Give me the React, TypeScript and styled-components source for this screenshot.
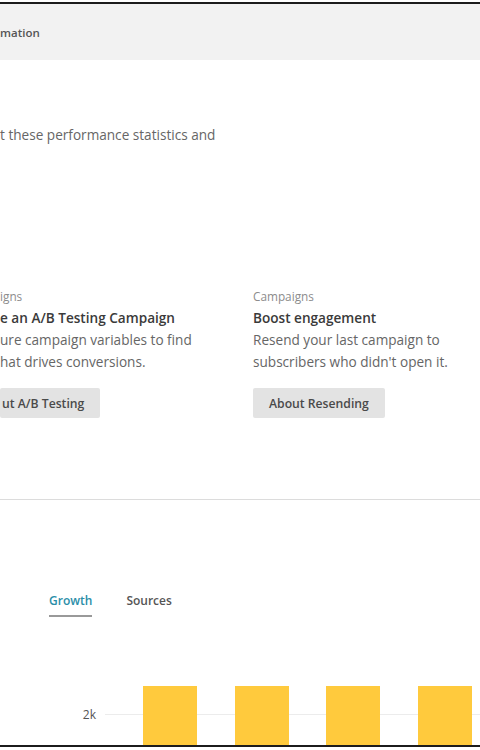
import styled, { createGlobalStyle } from 'styled-components';

const GlobalStyle = createGlobalStyle`
  html, body {
    margin: 0;
    padding: 0;
    background: #fff;
  }
  body {
    font-family: 'Open Sans', 'Noto Sans', sans-serif;
    color: #555;
  }
  * {
    box-sizing: border-box;
  }
`;

const bars = [1, 2, 3, 4];

export default function App() {
  return (
    <>
      <GlobalStyle />
      <Frame>
        <TopBar>mation</TopBar>
        <Intro>t these performance statistics and</Intro>
        <Cards>
          <Card>
            <Label>igns</Label>
            <Title>e an A/B Testing Campaign</Title>
            <Desc>
              ure campaign variables to find
              <br />
              hat drives conversions.
            </Desc>
            <Button $clipped>ut A/B Testing</Button>
          </Card>
          <Card>
            <Label>Campaigns</Label>
            <Title>Boost engagement</Title>
            <Desc>
              Resend your last campaign to
              <br />
              subscribers who didn't open it.
            </Desc>
            <Button>About Resending</Button>
          </Card>
        </Cards>
        <Divider />
        <Tabs>
          <Tab $active>Growth</Tab>
          <Tab>Sources</Tab>
        </Tabs>
        <Chart>
          <Axis>2k</Axis>
          <Plot>
            {bars.map(b => (
              <Bar key={b} />
            ))}
          </Plot>
        </Chart>
      </Frame>
    </>
  );
}

const Frame = styled.div`
  margin-top: 2px;
  height: 745px;
  border-top: 2px solid #1c1c1c;
  border-bottom: 2px solid #1c1c1c;
  display: flex;
  flex-direction: column;
  overflow: hidden;
`;

const TopBar = styled.div`
  height: 56px;
  flex-shrink: 0;
  display: flex;
  align-items: center;
  background: #f2f2f2;
  font-size: 11.5px;
  font-weight: 600;
  color: #555;
`;

const Intro = styled.p`
  margin: 65px 0 0;
  font-size: 13.6px;
  line-height: 20px;
  color: #666;
`;

const Cards = styled.div`
  display: grid;
  grid-template-columns: 253px 1fr;
  margin-top: 142px;
`;

const Card = styled.div`
  display: flex;
  flex-direction: column;
  align-items: flex-start;
`;

const Label = styled.div`
  font-size: 11.8px;
  line-height: 18px;
  color: #8c8c8c;
`;

const Title = styled.div`
  margin-top: 2px;
  font-size: 13.6px;
  line-height: 22px;
  font-weight: 600;
  color: #3a3a3a;
`;

const Desc = styled.div`
  font-size: 13.6px;
  line-height: 22px;
  color: #666;
`;

const Button = styled.button<{ $clipped?: boolean }>`
  margin-top: 15px;
  height: 30px;
  padding: 0 16px 0 ${p => (p.$clipped ? '2px' : '16px')};
  border: none;
  border-radius: 2px;
  background: #e3e3e3;
  font-family: inherit;
  font-size: 12.2px;
  font-weight: 600;
  color: #4a4a4a;
`;

const Divider = styled.hr`
  margin: 81px 0 0;
  border: none;
  border-top: 1px solid #dcdcdc;
`;

const Tabs = styled.div`
  display: flex;
  gap: 34px;
  padding-left: 49px;
  margin-top: 91px;
`;

const Tab = styled.div<{ $active?: boolean }>`
  font-size: 12px;
  line-height: 20px;
  font-weight: 600;
  padding-bottom: 4px;
  color: ${p => (p.$active ? '#2b8ea8' : '#555')};
  border-bottom: 2px solid ${p => (p.$active ? '#999' : 'transparent')};
`;

const Chart = styled.div`
  display: flex;
  gap: 9px;
  margin-top: 69px;
  flex: 1;
`;

const Axis = styled.div`
  width: 96px;
  padding-top: 21px;
  text-align: right;
  font-size: 12px;
  line-height: 16px;
  color: #555;
`;

const Plot = styled.div`
  position: relative;
  flex: 1;
  display: flex;
  align-items: stretch;
  gap: 37.5px;
  padding-left: 38px;

  &::before {
    content: '';
    position: absolute;
    left: 0;
    right: 0;
    top: 28px;
    border-top: 1px solid #ececec;
  }
`;

const Bar = styled.div`
  position: relative;
  width: 54px;
  background: #ffca3d;
`;
